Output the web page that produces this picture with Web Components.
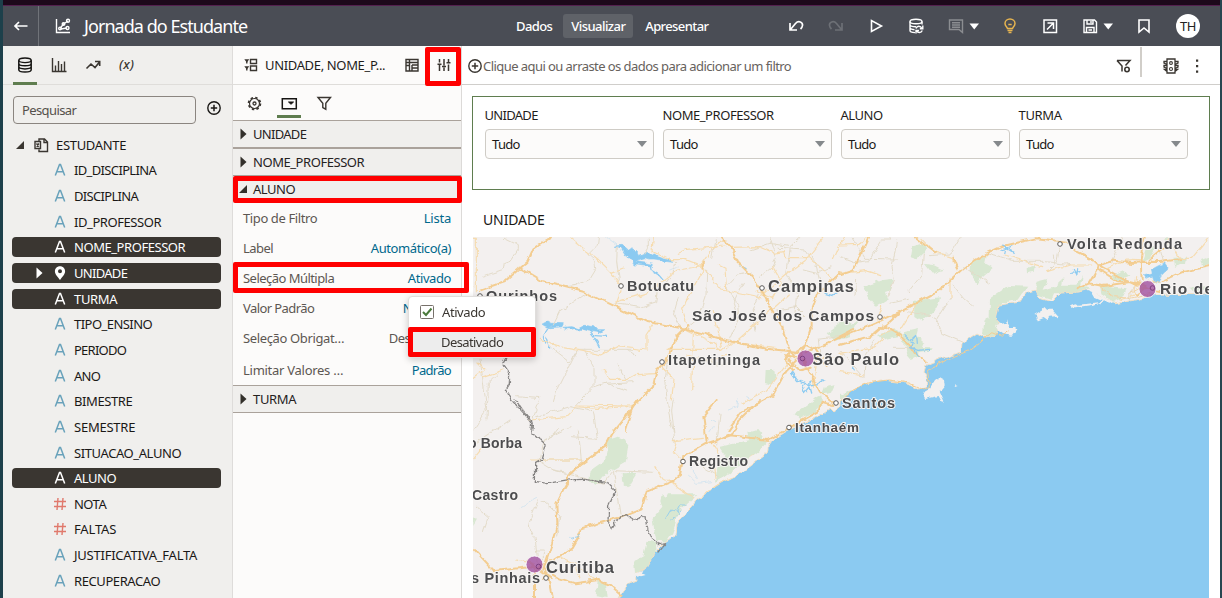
<!DOCTYPE html>
<html lang="pt">
<head>
<meta charset="utf-8">
<title>Jornada do Estudante</title>
<style>
html,body{margin:0;height:598px;overflow:hidden}
body{font:13px/20px "Noto Sans","Open Sans",sans-serif;color:#1a1816;background:#fff}
</style>
</head>
<body>
<analytics-app></analytics-app>
<script>
const make = (name, html, after) => customElements.define(name, class extends HTMLElement {
  constructor(){ super(); this.attachShadow({mode:'open'}); }
  connectedCallback(){
    if (this.done) return; this.done = true;
    this.shadowRoot.innerHTML = typeof html === 'function' ? html(this) : html;
    if (after) after(this);
  }
});

const ICONS = {
  back:'<path d="M16.500 10H4M8 6 4 10l4 4" stroke-width="1.700"/>',
  viz:'<path d="M3.500 3v13.500H17M7 12.500l3.500-4.500 4.500-3M8 13l6-1" stroke-width="1.400"/><circle cx="7" cy="12.500" r="1.300"/><circle cx="10.500" cy="8" r="1.300"/><circle cx="15" cy="4.800" r="1.500"/><circle cx="14.500" cy="12" r="1.500"/>',
  undo:'<path d="M4 7v7h7M4.500 13.500l5-6c3-3.300 7.500-1.500 7 2-.2 1.600-1 2.600-2 3.500" stroke-width="1.700"/>',
  redo:'<path d="M16 7v7H9M15.500 13.500l-5-6c-3-3.300-7.500-1.500-7 2 .2 1.600 1 2.600 2 3.500" stroke-width="1.700"/>',
  play:'<path d="M5.500 4.500v11L15.500 10z" stroke-width="1.600"/>',
  dbr:'<ellipse cx="10" cy="5.500" rx="6" ry="2.200"/><path d="M4 5.500v9c0 1.200 2.500 2 5 2.100M4 8.500c0 1.200 3 2.200 6 2.200M4 11.600c0 1.200 2 2 4.500 2.100M16 5.500v3M10 12.500c1-3 4.500-3 6 0M16.800 9.500v3.200h-3M16.300 14.500c-1.200 2.700-4.500 2.500-5.500.5M10 17.500v-3h3"/>',
  note:'<path d="M3.500 4h13v12.500L13 13.500H3.500zM6 6.800h8M6 9h8M6 11.200h8" stroke-width="1.400"/>',
  caret:'<path d="M1.500 7.500h9.500L6.250 13.500z" fill="currentColor" stroke="none"/>',
  bulb:'<path d="M7.500 12.500c0-1.200-2.500-2.400-2.500-5.100a5 4.500 0 0 1 10 0c0 2.700-2.500 3.900-2.500 5.100zM7.500 14.500h5M8.500 16.500h3M8.300 8.500h3.400" stroke-width="1.500"/>',
  open:'<path d="M4 4h12.500v12.500H4zM7.500 7h6v6M13 7.500 7 13.500" stroke-width="1.500"/>',
  save:'<path d="M4 4h10.500L16.500 6v10.500H4zM7 4v4h6V4M6.500 16.500v-5h7.500v5M8.500 14h3.500M11 5v2" stroke-width="1.400"/>',
  mark:'<path d="M5 4h10v12l-5-4-5 4z" stroke-width="1.600"/>',
  db:'<ellipse cx="10" cy="5.300" rx="6.200" ry="2.300"/><path d="M3.800 5.300v9.400c0 1.300 2.800 2.300 6.200 2.300s6.200-1 6.200-2.300V5.300M3.800 8.500c0 1.300 2.800 2.300 6.200 2.300s6.200-1 6.200-2.300M3.800 11.600c0 1.300 2.800 2.300 6.200 2.300s6.200-1 6.200-2.300" stroke-width="1.500"/>',
  bars:'<path d="M3.500 3v13.500H17.500M6.500 16V10.500M9.500 16V6M12.500 16V9M15.500 16V6.500" stroke-width="1.400"/>',
  trend:'<path d="M3.500 13.500 8 9l4 3.500 4.500-5.500M12 6.500h4.700V11" stroke-width="1.600"/>',
  plus:'<circle cx="10" cy="10" r="6.200" stroke-width="1.400"/><path d="M10 6.800v6.400M6.800 10h6.400" stroke-width="1.500"/>',
  dataset:'<path d="M8 6V4h5.500L16.500 7v9.500H8V14.500M13 4v3.500h3.500M4 6.500h5.500v7H4zM5.500 8.500l2.500 3M8 8.500 5.500 11.500" stroke-width="1.400"/>',
  layout:'<path d="M3.300 4.200h5L5.800 7.500zM3.300 11.200h5L5.800 14.500z" fill="currentColor" stroke="none"/><path d="M5.800 6v2.500M5.800 13v2.500M9.500 4.500h6v4h-6zM9.500 11h6v4.500h-6z" stroke-width="1.400"/>',
  table:'<path d="M4 4.500h12v11.500H4zM4 7.500h12M7.500 4v12M10 10h6M10 13h6M10 10v6M4 10.500h3.500" stroke-width="1.400"/>',
  sliders:'<path d="M5.500 4v3.500M5.500 9.500V16M10 4v6.500M10 12.500V16M14.500 4v3.500M14.500 9.500V16M3.500 9.200h4M8 11.500h4M12.500 7.800h4" stroke-width="1.500"/>',
  gear:'<circle cx="10.500" cy="10.500" r="5.900" stroke-width="1.800" stroke-dasharray="2.400 2.234"/><circle cx="10.500" cy="10.500" r="5" stroke-width="1.200"/><circle cx="10.500" cy="10.500" r="1.500" stroke-width="1.300"/>',
  drop:'<path d="M3.300 5.800h14v10h-14z" stroke-width="1.500"/><path d="M9.500 9 12 11.300 14.500 9z" fill="currentColor" stroke-width="1"/>',
  funnel:'<path d="M4 4.500h12.500l-4.700 5.800v5.900l-3-1.700v-4.200z" stroke-width="1.400"/>',
  funnelgear:'<path d="M3 4.500h13L11.500 9.500M3 4.500l5 5.500v5.500" stroke-width="1.500"/><circle cx="13" cy="13.500" r="2.200" stroke-width="1.600"/>',
  light:'<path d="M6 3h8v14H6zM6 5.500H3v1.500l3 1.500M6 9.500H3V11l3 1.500M14 5.500h3v1.500l-3 1.500M14 9.500h3V11l-3 1.500M6 13.500H3.500l2.500 2M14 13.500h2.500l-2.500 2" stroke-width="1.300"/><circle cx="10" cy="7" r="1.400" stroke-width="1.100"/><circle cx="10" cy="13" r="1.500" stroke-width="1.100"/>',
  dots:'<path d="M9 3.500h2.200v2.200H9zM9 9h2.200v2.200H9zM9 14.500h2.200v2.200H9z" fill="currentColor" stroke="none"/>',
  A:'<path d="M5.300 15.500 9.500 4.500h1l4.200 11M7 11.800h6" stroke-width="1.500"/>',
  num:'<path d="M8 4 7 16M13 4l-1 12M4 7.500h12M4 12.500h12" stroke-width="1.400"/>',
  pin:'<path d="M10 3.300c-3 0-5.100 2.200-5.100 4.900C4.900 11.500 8 14 10 17c2-3 5.100-5.500 5.100-8.800 0-2.700-2.100-4.900-5.100-4.900zm0 3a2 2 0 1 1 0 4 2 2 0 0 1 0-4z" fill="currentColor" stroke="none"/>',
  right:'<path d="M7.500 4.500v11l6-5.500z" fill="currentColor" stroke="none"/>',
  down:'<path d="M6 14h8V6z" fill="currentColor" stroke="none"/>'
};
make('ui-icon', e => `<style>:host{display:block;width:20px;height:20px;flex:none}:host([name=caret]){width:12px}svg{display:block}</style>
<svg width="${e.getAttribute('name')==='caret'?12:20}" height="20" fill="none" stroke="currentColor" stroke-width="1.400">${ICONS[e.getAttribute('name')]}</svg>`);

make('tool-header', `<style>
:host{display:flex;height:40px;align-items:center;background:#4a4d55;color:#fff;box-sizing:border-box}
.back{width:35px;height:40px;border-right:1px solid #707379;display:grid;place-items:center;margin-right:14px}
h1{font:18px/24px "Noto Sans",sans-serif;margin:0 0 0 11px;width:424px;white-space:nowrap}
nav{display:flex;font-weight:500;align-items:center}
nav span{height:24px;line-height:25px;padding:0 8px;border-radius:3px;box-sizing:border-box}
.on{background:#5f6268;width:70px;margin:0 4px 0 3px}
.tools{display:flex;gap:20px;margin-left:auto;padding-right:20px;align-items:center}
.dim{color:#6d7076}.note{color:#8b8d91}.bulb{color:#e6b450}
.pair{display:flex;gap:2px;width:34px}.avatar{width:24px;height:24px;border-radius:50%;background:#fff;color:#222;text-align:center;line-height:25px;margin-left:2px;font-weight:400}
</style><div class="back"><ui-icon name="back"></ui-icon></div><ui-icon name="viz"></ui-icon>
<h1><t-x w="163">Jornada do Estudante</t-x></h1>
<nav><span><t-x w="36">Dados</t-x></span><span class="on"><t-x w="54">Visualizar</t-x></span><span><t-x w="63">Apresentar</t-x></span></nav>
<div class="tools"><ui-icon name="undo"></ui-icon><ui-icon class="dim" name="redo"></ui-icon><ui-icon name="play"></ui-icon><ui-icon name="dbr"></ui-icon>
<div class="pair"><ui-icon class="note" name="note"></ui-icon><ui-icon name="caret"></ui-icon></div><ui-icon class="bulb" name="bulb"></ui-icon><ui-icon name="open"></ui-icon>
<div class="pair"><ui-icon name="save"></ui-icon><ui-icon name="caret"></ui-icon></div><ui-icon name="mark"></ui-icon><div class="avatar"><t-x w="16">TH</t-x></div></div>`);

make('tree-item', e => `<style>
:host{display:block;height:25.67px}
div{height:20px;margin:0 11px 0 9px;border-radius:4px;display:flex;align-items:center;white-space:nowrap;padding-left:17px;position:relative;top:2.800px}
:host([sel]) div{background:#3a3631;color:#fff}
.k{margin-right:4px;color:#69a2bb}.k.num{color:#e0796c}:host([sel]) .k{color:#fff}
.gap{width:20px}.a{margin-right:1px}</style>
<div>${e.hasAttribute('arrow')?'<ui-icon class="a" name="right"></ui-icon>':'<span class="gap a"></span>'}<ui-icon class="k ${e.getAttribute('kind')}" name="${e.getAttribute('kind')||'A'}"></ui-icon><t-x w="${e.getAttribute('w')}">${e.textContent}</t-x></div>`);

const fields = [['ID_DISCIPLINA',82],['DISCIPLINA',64],['ID_PROFESSOR',87],['NOME_PROFESSOR',111,'sel'],['UNIDADE',53,'sel arrow kind="pin"'],['TURMA',43,'sel'],['TIPO_ENSINO',78],['PERIODO',52],['ANO',26],['BIMESTRE',58],['SEMESTRE',61],['SITUACAO_ALUNO',107],['ALUNO',42,'sel'],['NOTA',32,'kind="num"'],['FALTAS',42,'kind="num"'],['JUSTIFICATIVA_FALTA',123],['RECUPERACAO',86]];
make('data-panel', `<style>
:host{display:block;width:229px;flex:none;background:#f0efed;border-right:1px solid #dedcda;color:#1a1816;overflow:hidden}
.tabs{height:39px;border-bottom:1px solid #dfddda;display:flex;padding:0 10px;gap:10px;box-sizing:border-box;color:#3a3631}
.tabs span{width:24px;height:39px;box-sizing:border-box;padding:9px 2px 0;}
.tabs .on{border-bottom:3px solid #5f7d4f;color:#161513}
.tabs .fx{font:italic 500 13px/20px "Noto Sans",sans-serif;padding:8px 4px 0}
.search{display:flex;padding:11px 8px 0 10px;align-items:flex-start;gap:8px}
.search ui-icon{margin-top:2px}
.box{height:28px;width:183px;border:1px solid #8b8580;border-radius:4px;box-sizing:border-box;padding:3px 8px;color:#55514c;line-height:21px}
.root{display:flex;height:20px;align-items:center;margin-top:11px;padding-left:7px;color:#3a3631}
.root ui-icon+ui-icon{margin:0 5px 0 1px}.root t-x{color:#1a1816}.list{margin-top:2.500px}
</style><div class="tabs"><span class="on"><ui-icon name="db"></ui-icon></span><span><ui-icon name="bars"></ui-icon></span><span><ui-icon name="trend"></ui-icon></span><span class="fx"><t-x w="15">(x)</t-x></span></div>
<div class="search"><div class="box"><t-x w="54">Pesquisar</t-x></div><ui-icon name="plus"></ui-icon></div>
<div class="root"><ui-icon name="down"></ui-icon><ui-icon name="dataset"></ui-icon><t-x w="70">ESTUDANTE</t-x></div>
<div class="list">${fields.map(([t,w,a=''])=>`<tree-item w="${w}" ${a}>${t}</tree-item>`).join('')}</div>`);

make('fold-head', e => `<style>:host{display:flex;height:26px;align-items:center;background:#f0efed;border-top:1px solid #aaa29b;border-bottom:1px solid #aaa29b;box-sizing:content-box;color:#33302b}t-x{color:#25221e}</style><ui-icon name="${e.hasAttribute('open')?'down':'right'}"></ui-icon><t-x w="${e.getAttribute('w')}"><slot></slot></t-x>`);
make('prop-row', e => `<style>:host{display:flex;height:30px;align-items:center;justify-content:space-between;padding:0 10px;color:#5c5752;white-space:nowrap}b{font-weight:400;color:var(--value,#00688c)}</style><t-x w="${e.getAttribute('w')}">${e.getAttribute('label')}</t-x><b><t-x w="${e.getAttribute('vw')}"><slot></slot></t-x></b>`);
make('property-panel', `<style>
:host{display:block;width:228px;flex:none;background:#fcfbfa;border-right:1px solid #dcdad8}
.top{height:39px;box-sizing:border-box;border-bottom:1px solid #dfddda;display:flex;align-items:center;padding:0 7px 1px 8px;color:#3a3631}
.top t-x{color:#1f1d1a;margin-left:4px;flex:1}.top ui-icon+ui-icon{margin-left:12px}
.tabs{display:flex;gap:11px;height:34px;padding-left:9px;box-sizing:border-box;color:#3a3631}
.tabs span{width:24px;height:33px;padding:8px 2px 0;box-sizing:border-box}.tabs .on{border-bottom:3px solid #5f7d4f;color:#161513}
.head{margin-top:1px}.al{height:26px;margin-top:-1px;border-bottom:0}.rows{height:183px;box-sizing:border-box;padding-top:1px}.last{margin-top:1px;height:32px}.grey{--value:#5c5752}
</style><div class="top"><ui-icon name="layout"></ui-icon><t-x w="120">UNIDADE, NOME_P...</t-x><ui-icon name="table"></ui-icon><ui-icon name="sliders"></ui-icon></div>
<div class="tabs"><span><ui-icon name="gear"></ui-icon></span><span class="on"><ui-icon name="drop"></ui-icon></span><span><ui-icon name="funnel"></ui-icon></span></div>
<fold-head class="head" w="53">UNIDADE</fold-head><fold-head w="111">NOME_PROFESSOR</fold-head><fold-head class="al" open w="42">ALUNO</fold-head>
<div class="rows"><prop-row label="Tipo de Filtro" w="74" vw="27">Lista</prop-row><prop-row label="Label" w="30" vw="80">Automático(a)</prop-row><prop-row label="Seleção Múltipla" w="91" vw="43">Ativado</prop-row><prop-row label="Valor Padrão" w="71" vw="48">Nenhum</prop-row><prop-row class="grey" label="Seleção Obrigat…" w="101" vw="62">Desativado</prop-row><prop-row class="last" label="Limitar Valores …" w="100" vw="39">Padrão</prop-row></div>
<fold-head w="43">TURMA</fold-head>`);

make('filter-select', e => `<style>:host{display:block;width:169px}label{display:block;height:23px;line-height:20px;color:#1f1d1a;margin:-1px 0 1px -.500px}.b{height:30px;border:1px solid #cfccc6;border-radius:4px;background:#fcfbfa;box-sizing:border-box;display:flex;justify-content:space-between;align-items:center;padding:0 6px}i{border:5px solid transparent;border-top:6px solid #85898c;border-bottom:0}</style><label><t-x w="${e.getAttribute('w')}"><slot></slot></t-x></label><div class="b"><t-x w="27.500">Tudo</t-x><i></i></div>`);

const label = (t,x,y,w,s) => `<text x="${x}" y="${y}" textLength="${w}" font-size="${s}">${t}</text>`;
make('geo-map', `<style>:host{display:block;height:361px;width:736px}svg{display:block}
text{font-family:"Liberation Sans",sans-serif;font-weight:700;fill:#4c4c4e;stroke:#f7f5f3;stroke-width:2px;paint-order:stroke;stroke-linejoin:round}
path{fill:none;stroke-linejoin:round;stroke-linecap:round}.g path{fill:#d8e7d1}.w path{fill:#8bcaf1;stroke:#8bcaf1;stroke-width:2}
.m{stroke:#f3cd91;stroke-width:6}.s{stroke:#f6dcb0;stroke-width:3.500}.t{stroke:#e3dbc9;stroke-width:3}.r{stroke:#8dcbf1;stroke-width:4}.b{stroke:#858382;stroke-width:4;stroke-dasharray:13 4 4 4}
.l{fill:#f3f0ef}</style>
<svg width="736" height="361" viewBox="473 237 736 361">
<defs><filter id="rough" filterUnits="userSpaceOnUse" x="463" y="227" width="756" height="381" color-interpolation-filters="sRGB"><feTurbulence type="fractalNoise" baseFrequency=".11" numOctaves="3" seed="4"/><feDisplacementMap in="SourceGraphic" scale="5.500" xChannelSelector="R" yChannelSelector="G"/></filter></defs>
<rect x="473" y="237" width="736" height="361" fill="#f3f0ef"/>
<g filter="url(#rough)"><g class="g">
<g transform="translate(470 230) scale(.33333)"><path d="M890 420l22 0 4 20-10 22-18-6zM1070 310l40-30 30-3v45l-45 10zM1065 470l30-8-12 26-28 8zM970 555l62-46 22-10 3 28-62 30z"/></g>
<g transform="translate(840 230) scale(.33333)"><path d="M215 50l38-12 5 22-28 28-20-7zM255 102l30 4 27 13-34 12zM70 170l60-20 30-4-7 34-18 6 8 24-35 20-18-22zM390 95l50-20-5 25 26 14-36 30-12 20-24-42zM222 212l78-10-5 25-50 48-22-14zM560 115l25-9-4 20-20 4zM450 205l60-40 55 2-20 24-12 18-48 11-12 48 5 50-18 12-32-14 6-46 15-5zM590 155l32-8-14 32 36-10 26-22-4 20 40 0 22-28-4 26 28 10-45 13-65 2-8 20-45-14-3-26zM815 136l38-15 15 19-37 16zM780 165l80 10-15 30-25 10-36-22zM1000 80l38 0-3 22-30 8zM1080 90l27-10v25l-18 5zM920 53l30-6-20 35-25 12zM970 45l12-25 5 28zM1050 170l57-5v12l-45 7zM115 315l50-18 20 20-28 5-35 9zM190 307l44-10-5 20 24 22-5 12 31 1-14 10-30 5 0 14-26 12-12-14 8-25-20-18zM0 300l50-30-12 35-38 12zM0 495l40-15-5 18-35 20z"/></g>
<g transform="translate(470 400) scale(.33333)"><path d="M415 120l28-10 22 8 10 20-8 48-60 35-28 34-22-10 5-32 42-30zM455 220l44-1-25 40-18-15zM750 140l90-20-5-22 27-8 14 17 13 22-30 32-62 54-62 30 10-60 22-20zM980 45l35-30 30-15-4 35-50 22zM575 285l14 8 5-10 85 0-52 60-20 55-20 30-28-3-12-70 30-35-6-20zM530 425l30 5 4 25-34 55-38 10-2-34 30-18zM383 543l25 8 5 43-36-5zM10 350l10 8-10 17z"/></g></g>
<path d="M615 604l4-6 8-13 10-4-1-8 10-4 9-16 10-10 11-8 1-11 5-7 15-17 20-15 26-14 24-18 1-3 0-7 19-12 33-16 10-7 4 4 5-4 0-6 10-9 13-8 20-5 24 3 11 5 9-1 1-9-3-6 2-7 16-7 19-6 1-9 15-10 9 5 10-3 4-7-4-8 3-15 22-3 5-9 10-3 3 8 13 4 9-9 18-1 10-3 13 9 10 3 2 3 15-3 13-2 10-6 2 1 66 1v312z" style="fill:#8bcaf1;stroke:#f5e0c3;stroke-width:1"/>
<g class="w"><g transform="translate(840 230) scale(.33333)"><path d="M918 145l-5-8 21-5-2-12 22-12 20-9 7 10-2 14-16 13-8 25-12-5-6-17z"/></g>
<g transform="translate(470 230) scale(.33333)"><path d="M435 48l22-2 16 15 9-7 20 16 4 7 25-10 13 8 10-3 12 9 15 5 30 8-3 3-35-4-24-3-13 0-11-4-26 7-9 4-14-17-12-5-14-22zM487 92l20 5 25 3 18 3-4 5-45-6-8 0zM217 282l17-9 12 7 34 1-4 9-36 3-17-6zM280 292l26-2 14 5-17 5 26-6 15-8 27 4 11 12 22 0-10 7-42-6-18-6-9 4-34-5z"/></g></g>
<g transform="translate(840 230) scale(.33333)"><path class="l" d="M580 255l28-18 5-6 8 8 18 0 17 19-25 2-8 10-12-9-20 8-3-12zM500 280l8 12 18-2 3 8-15 20-22-6-12-8-12-16zM285 450l12-8 15 8 2 14-15 18 15 34-10-3-8-15-40 9-9-18 20-11zM690 226l16-6 10 4 95-11-55 12-60 8zM343 464l10 4-8 3zM492 285l11-20-3 17zM735 178l16-3 30 25 39 15-15 6-39-17-11-19z"/></g>
<g transform="translate(470 230) scale(.33333)">
<path class="r" d="M540 104l5 18 20 12 15 18M233 297l-16 24 8 19M228 322l11 35M360 310l20 25 8 15M375 317l35 2M965 427l18 25M982 450l34 17 10-17M995 463l8 25 14-17 5 18M1017 465l31-4 13-9M1065 190l20 6 15-9M810 105l15 8" style="stroke-width:4"/>
<path class="r" d="M600 120l25-12M830 500l15 8M775 540l25-10 4-23M725 570l12 8M410 22l30 22" style="stroke-width:2;opacity:.45"/>
<path class="t" d="M100 22l45 22 0 12-25 38-20 7-3 18-56 19M385 22l-3 24-28 28 20 18 3 24-18 30-38 20-32 4M442 50l-2 43 8 60M535 22v34l-10 16M630 88l-18 16-3 30-25 28M710 120l-2 80-22 65-30 25M900 22l20 60-15 30-37 30M925 55l80 5 30 35 22 90M840 128l-40 8-32 34 38 60 5 40M565 178l-5 40-45 15-80-12M350 190l-80 55-20 40M240 350l60 45 22-34 160 0M320 365l-60 120-10 30M345 360l30 56 0 50-55 58M490 455l-85 5-30 10M595 370l-10 90 15 110 10 30M1050 380l-5-55 80-10M640 305l-30-50 15-52M690 390l80 14 10-20M680 380l65 25M30 385l20 150-40 65M85 430l-30 30-4 110M140 500l70 6-22 60M740 22l-15 60M840 60l60-20 60 10 30-28M960 60l-10 70 30 60-5 60M1000 120l40 10 40-20M820 160l-30 60 15 50-30 70M870 190l-25 60 10 50M920 240l60-10 30 30M410 460l60 20M440 400l30 50M500 380l-30-20"/>
<path class="s" d="M10 22h9v160M300 22l80 65 38 37 36 42M425 130l35-13M454 180l-15 40M550 22l-4 42 52 25 50 0 50 20M625 70l28-12 112-10M705 120l50 60 118 24 15-28M700 98l40-55 28-14M705 102l-80 15-90 70-100 30M745 105l20 10 5 65M780 52l90-2 45 20 25-5 5 18 70 0 70 60M1060 22l-55 70-55 40-65 55M1120 22l-30 68M530 360l-90-10-45 25-115-22-72-25M650 300l68 32 35 26-165 0M655 295l-20-60 67-120M548 285l-20 30 0 40M755 360l30-22 135 15M755 355l-22-110M770 360l185-165M670 310l-5 170M650 375l70 18 50-20M570 405l42 45-8 60M400 420l20 28 52 0 25-14 60-3M320 525l162 3 26-12M40 440l60-20M10 445l34-26-20-20M905 110l28 48-25 48-50-22M965 380l-75 100-75 40M1020 390l90-10M1040 390l-10 80"/>
<path class="m" d="M243 22L190 55 173 95 102 156 30 182M148 113l68 40 130 34 85 40 100 48 117 21 120 35 120 25 100 10M753 22l28 30 20 42 50 50 30 47 23 45 33 55 12 50 25 40M705 98l-8 15M655 285l-35 35-20 45-15 35-24 18-12 50-62 62-22 70M1004 370l70-30 76-40M1110 130l-70 62-15 40 0 58-20 60-15 30M990 385l-45-10M980 390l-32 32-40 75-95 50-38 55M1000 390l50 95 40 32M975 370l30-23 30 14 35 50M955 390l30 30 40-10M960 367l-15 25 22 30"/>
<path class="b" d="M107 385l-8 16 20 28-1 35-12 16 20 32 36 38 24 28 3 22"/>
</g>
<g transform="translate(840 230) scale(.33333)">
<path class="t" d="M0 82l40 16 45-6 40-62 28 0-5-12M40 25l35 60 95 2M170 30l-14 82 7 35-20 55M250 70l-5 65-40 50M340 165l30 40 30 25M640 75l5 30-20 20M440 70l75 24 95 0 80 10M370 110l60 40 15 10M50 145l-5 55M150 220l55-12M200 245l70 12 22 12 40-65M290 270l15 40 60 26M850 22l-35 80M660 45l-10 50M960 55l10 40M900 150l-30 40-2 20M0 360l70 80M105 330l-25 40-5 70M160 355l50 0M360 22l-30 50-60 5"/>
<path class="s" d="M0 130l80-8 45 15M180 300l50-80M240 22l40 42 56 18 18 38M495 75l110 35M620 125l70-20 65 0M0 45l60-2 15-20M780 125l80-35 90 5M890 140l-10 55-40 15M0 370l105-20 20-20M0 425l75 10M1000 50l20 35 35 0 50-60M330 205l0-60M110 270l15-42M165 300l-40 15"/>
<path class="m" d="M85 22L40 122 0 135M0 325l105-45 75-35 120-65 90-80 55-32 45-20 100-23 90 10 32 30 45 22 22 20 80 45 45 20 55 12M775 107l45-15 60 7 25-3 55 0 60-8M905 150l-3-60 5-40 7-28M775 110l-30 50-35 15M745 160l45 8 80-12 50 12M775 117l55 35 80 10M925 90l60-50 8-18M965 155l60-28 90-20M225 22l60 45M340 80l14 35M0 345l105-32 70-63M130 285l50 32 30 30 17 25 30 25M918 170l-30 25"/>
<path class="t" d="M780 170l40 30 50 5 60-15M890 170l35 30M870 190l40-20M930 150l30 12" style="stroke:#f1d4a5"/>
<path class="m" d="M0 515l40-35 45-22 60-8 65 9 40 18 18-8-5-48 55-30 70-30 70-55 30 13 20-13" style="stroke-width:3"/>
<path class="r" d="M488 45l30 18M482 60l15-4 20-9M497 56l-3 14M512 55l8 14M695 130l25-8M700 118l8 18M708 133l2-20M195 317l22 20-5 16 25 8 32-3M212 330l15-14 2 24M223 353l11 27M35 408l8 12" style="stroke-width:3.500"/>
</g>
<g transform="translate(470 400) scale(.33333)">
<path class="t" d="M120 60l-110 75M200 50l100-30 70 15 12 80-80-5M300 80l-80 40-12 55M225 120l25-15 15-20M325 90l10 100M210 180h130M210 185l40 25 60 10M250 210l150 40 30-38 120 5M430 212l20 130M215 300l55 48-10 60M205 300l-30 75 20 40 10 80M685 190l25 20 35 20M750 40l-10 95M610 0l-5 30 10 100M200 450h20l0 30M20 320l35 30-15 45"/>
<path class="s" d="M0 190l40-50M180 60l110-10 30-30 60 5 90-5M185 180l150 0M555 200l28 40 25 2M620 125l-10 30 20 20M610 125l90-10M600 240l25 25 30 20 25 10 110-70 60-60M730 135l15 25-15 35 5 40M320 500l10 35M265 470l55 25 55 45M140 480l50 10"/>
<path class="m" d="M503 0l-35 50-40 50-22 40-70 50-45 40 0 20-12 20-20 40 3 60-22 80-20 60M870 0l-60 60-25 45-75 25-70 40-10 55-25 20-75 30-15 50-75 30-105 30-10 25-20 35-55 35-40 20M720 130l55-25 120 15 60-35 90-50 10-30 35 10M740 0l-40 50 10 75M0 435l10 10 60 65 90-10 60-2M210 500l60 35 45 15 70-10 35 15 35 30M235 535l15 80M195 510v110M240 480l-20 55M180 490l65 45"/>
<path class="r" d="M300 415l25-5 5-10M590 355l15-25 15 5 10-20 25 0M605 360l25-30M620 360l10-18" style="stroke-width:2.500"/>
<path class="t" d="M655 225l25 25 45-5M665 200l20 35M150 320l50-30M730 80l-10 15" style="stroke:#d5e5ef;stroke-width:3"/>
<path class="b" d="M135 0l50 62-2 35 43 38-12 42-17 10-1 60 28 5 65-12 55-2 70 10 22 22-20 50-2 45 14 20 22-35 20-6 18 16 15 1 14-18 8 6 6 40 14 30 22 15 20-3-20 25"/>
<path class="l" d="M500 518l20-5-4 8 8 4-22 6-8 12-10-10z"/><path class="l" d="M895 142l-70 66-85 45-60 45-45 45-20 28 0-18 20-30 55-46 62-38 110-82z"/>
</g></g>
<g fill="#fff" stroke="#5c5a59" stroke-width="1">${[[1060,244],[762,288],[621,286],[480,296],[880,317],[662,362],[836,403],[789,427.500],[683,461.500],[546,578]].map(([x,y])=>`<circle cx="${x}" cy="${y}" r="2.300"/>`).join('')}</g>
${label('Volta Redonda',1067,248.5,115,14.5)+label('Campinas',768,292,86,16.5)+label('Botucatu',627,291,67,14.5)+label('Ourinhos',486,300.5,71,14.5)+label('São José dos Campos',692,321,182,15.5)+label('Itapetininga',668,365,92,14.5)+label('São Paulo',812,364.5,87,16.5)+label('Santos',842,408,53,14.5)+label('Itanhaém',795,432,64,13.5)+label('Registro',689,465.5,59,14)+label('o Borba',468,448,54,14)+label('Castro',472,499.5,46,14)+label('Curitiba',546,572.5,68,16.5)+label('s Pinhais',471,583,69,14.5)+label('Rio de',1160,293.5,53,15.5)}
${[[1147.5,289],[805.5,358.500],[534.5,564.500]].map(([x,y],i)=>`<circle cx="${x}" cy="${y}" r="8.500" fill="#a050a0" fill-opacity=".8" stroke="#fff" stroke-width=".8"/><circle cx="${x+[5,-3,4][i]}" cy="${y+[-1,0,2][i]}" r="2.300" fill="none" stroke="#733675" stroke-opacity=".8"/>`).join('')}
</svg>`);

make('report-canvas', `<style>
:host{display:block;flex:1;background:#fff;min-width:0}
.bar{height:39px;border-bottom:1px solid #d0cecb;box-sizing:border-box;display:flex;align-items:center;padding:1px 13px 0 3px;color:#3a3631}
.bar t-x{color:#67625d;margin-left:-2px;flex:1}.sep{width:2px;height:30px;background:#d1cec9;margin:-8px 19px 0 6px;flex:none}.bar .dots{margin-left:6px}
.filters{margin:11px 0 0 10px;width:738px;height:94px;box-sizing:border-box;border:1px solid #5f7d4f;display:flex;gap:9px;padding:9px 12px}
h2{font:14px/20px "Noto Sans",sans-serif;margin:20px 0 7px 21px}geo-map{margin-left:11px}
</style><div class="bar"><ui-icon name="plus"></ui-icon><t-x w="308">Clique aqui ou arraste os dados para adicionar um filtro</t-x><ui-icon name="funnelgear"></ui-icon><div class="sep"></div><ui-icon name="light"></ui-icon><ui-icon class="dots" name="dots"></ui-icon></div>
<div class="filters"><filter-select w="53">UNIDADE</filter-select><filter-select w="111">NOME_PROFESSOR</filter-select><filter-select w="42">ALUNO</filter-select><filter-select w="43">TURMA</filter-select></div>
<h2><t-x w="61.500">UNIDADE</t-x></h2><geo-map></geo-map>`);

make('option-menu', `<style>:host{position:absolute;left:408px;top:296px;width:126px;height:60px;background:#fff;border:1px solid #e0dedc;border-radius:4px;box-shadow:0 2px 7px #0003;color:#3a3631;overflow:hidden}
div{height:30px;display:flex;align-items:center;padding-left:11px}div+div{background:#ededed;padding-left:32px}svg{margin-right:8px}</style>
<div><svg width="14" height="14" fill="none"><rect x=".5" y=".5" width="13" height="13" rx="1" fill="#fff" stroke="#77716b"/><path d="M3 7l3 3 5.500-6.500" stroke="#4b7a3c" stroke-width="2"/></svg><t-x w="43">Ativado</t-x></div><div><t-x w="62">Desativado</t-x></div>`);
make('red-mark', e => {const [x,y,w,h]=e.getAttribute('box').split(' ');return `<style>:host{position:absolute;left:${x}px;top:${y}px;width:${w}px;height:${h}px;box-sizing:border-box;border:5px solid #f00;border-radius:2px}</style>`});

make('analytics-app', `<style>
:host{display:flex;flex-direction:column;width:1222px;height:598px;box-sizing:border-box;position:relative;overflow:hidden;background:#fff;border-left:3px solid #1d404b;border-right:2px solid #284650}
.strip{height:5px;background:#1d091b;border-bottom:1px solid #54204f;flex:none}main{flex:1;display:flex;min-height:0}.over{position:absolute;left:-3px;top:0}
</style><div class="strip"></div><tool-header></tool-header><main><data-panel></data-panel><property-panel></property-panel><report-canvas></report-canvas></main>
<div class="over"><option-menu></option-menu><red-mark box="425 47 36 39"></red-mark><red-mark box="233 176 229 27"></red-mark><red-mark box="233 262 236 31"></red-mark><red-mark box="408 327 128 30"></red-mark></div>`);

/* Text whose tracking adapts so that it occupies the width in its "w" attribute. */
make('t-x', `<style>:host{display:block;white-space:nowrap}span{display:inline-block}</style><span><slot></slot></span>`, e => {
  const s = e.shadowRoot.querySelector('span');
  const slot = s.querySelector('slot');
  const text = slot.assignedNodes({flatten:true}).map(n => n.textContent).join('');
  const want = +e.getAttribute('w');
  if (want && text.length) s.style.letterSpacing = ((want + .2 - s.getBoundingClientRect().width) / text.length).toFixed(3) + 'px';
});
</script>
</body>
</html>
